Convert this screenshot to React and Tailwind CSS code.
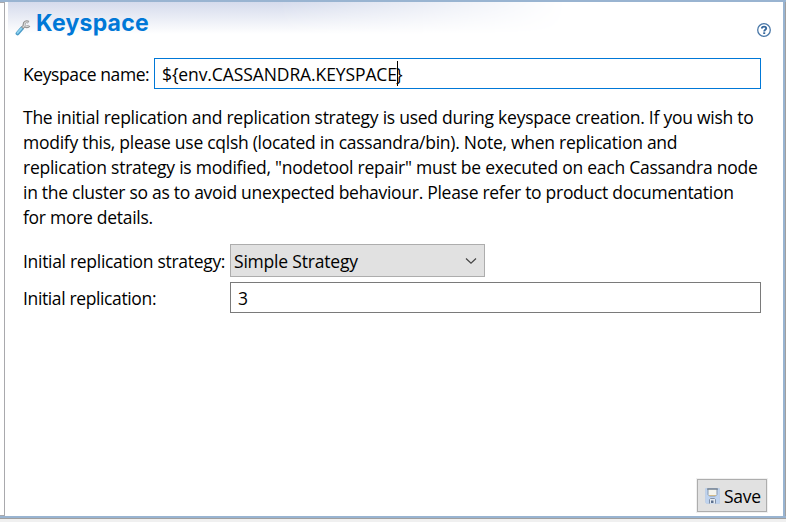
import React from "react";

const paragraph = [
  ["The initial replication and replication strategy is used during keyspace creation. If you wish to", "tracking-[-0.25px]"],
  ["modify this, please use cqlsh (located in cassandra/bin). Note, when replication and", "tracking-[-0.27px]"],
  ["replication strategy is modified, \"nodetool repair\" must be executed on each Cassandra node", "tracking-[-0.25px]"],
  ["in the cluster so as to avoid unexpected behaviour. Please refer to product documentation", "tracking-[-0.285px]"],
  ["for more details.", "tracking-[-0.28px]"],
];

function WrenchIcon() {
  return (
    <svg width="16" height="17" viewBox="0 0 16 17" fill="none">
      <path d="M2.500 14.400 7 9.200" stroke="#4b9cc8" strokeWidth="3.800" strokeLinecap="round" />
      <path d="M2.500 13.800 6.600 9.200" stroke="#8fd3f0" strokeWidth="1.800" strokeLinecap="round" />
      <path d="M7.200 9 10 6" stroke="#8c8c8c" strokeWidth="3.200" />
      <path d="M13.600 3.300C11.500 2 9 3 9 5.500c.300 2.400 3.600 3.200 5.200 1.200" stroke="#8e8e8e" strokeWidth="2.800" />
      <path d="M13.400 3.300C11.500 2.200 9.300 3.200 9.300 5.500c.300 2 3.200 2.700 4.700 1.100M7.600 8.500 10 6" stroke="#d6d6d6" strokeWidth="1.300" />
    </svg>
  );
}

function HelpIcon() {
  return (
    <svg width="14" height="14" viewBox="0 0 14 14" fill="none">
      <circle cx="7" cy="7" r="6.300" fill="#fff" stroke="#4a78a8" strokeWidth="1.300" />
      <path d="M4.900 5.400C4.900 3 9.200 3 9.200 5.300 9.200 6.800 7.200 6.700 7.200 8.500" stroke="#35679c" strokeWidth="1.900" />
      <path d="M6.200 9.300H8.200V11H6.200Z" fill="#35679c" />
    </svg>
  );
}

function FloppyIcon() {
  return (
    <svg width="15" height="16" viewBox="0 0 15 16" fill="none">
      <path d="M.5.500H14.500V15.500H1.500L.500 14.500Z" fill="#bfd3ee" stroke="#c0d0e6" />
      <path d="M3 1H12V6.500L10.500 8H4.500L3 6.500Z" fill="#f4f4ee" stroke="#8799b0" />
      <path d="M2 1H13" stroke="#66727f" />
      <path d="M4 7.500H11" stroke="#cfb98a" />
      <path d="M4.500 15.500V11.500L5.500 10.500H9.500L10.500 11.500V15.500" fill="#e6ebf1" stroke="#8090a8" />
      <path d="M6 12.500H8.500V15H6Z" fill="#5b6f8d" />
    </svg>
  );
}

export default function App() {
  return (
    <div className="flex h-[522px] w-[790px] overflow-hidden bg-white font-['Open_Sans','Noto_Sans',sans-serif] text-[17.5px] leading-[25px] text-black">
      <div className="flex w-[786px] flex-col bg-[#f0f0f0]">
        <div className="flex h-[519px] flex-col border-t-2 border-[#99b4d1] bg-white">
          <div className="flex min-h-0 flex-1">
            <div className="w-[5px] border-y border-r border-[#a9a9ad]" />
            <main className="flex min-w-0 flex-1 flex-col pr-[22px] pl-[18px]">
              <header className="relative -mr-[22px] -ml-[15px] flex h-[56px] items-start">
                <div className="absolute inset-0 bg-linear-to-b from-[#d5dbec] to-white to-[32px] mask-r-from-35% mask-r-to-72%" />
                <div className="relative flex flex-1 items-start pt-[17px] pl-[7px]">
                  <WrenchIcon />
                  <h1 className="-mt-[10px] ml-[5px] font-['Inter','Open_Sans',sans-serif] text-[23px] leading-[28px] font-bold tracking-[0.25px] text-[#0078d7]">Keyspace</h1>
                </div>
                <div className="relative pt-[21px] pr-[12px]"><HelpIcon /></div>
              </header>
              <div className="flex h-[31px] items-center">
                <label className="w-[131px] shrink-0 pt-px tracking-[-0.4px] whitespace-nowrap">Keyspace name:</label>
                <div className="flex h-[31px] flex-1 items-center border border-[#0078d7] pl-[7px]">
                  <span className="pt-px tracking-[-0.1px] whitespace-nowrap">{"${env.CASSANDRA.KEYSPACE"}</span>
                  <span className="h-[25px] w-px bg-black" />
                  <span className="-ml-[2px] pt-px">{"}"}</span>
                </div>
              </div>
              <div className="mt-[16px]">
                {paragraph.map(([text, spacing]) => (
                  <div key={text} className="h-[25px]"><span className={`whitespace-nowrap ${spacing}`}>{text}</span></div>
                ))}
              </div>
              <div className="mt-[14px] flex h-[33px] items-center">
                <label className="w-[207px] shrink-0 pt-px tracking-[-0.3px] whitespace-nowrap">Initial replication strategy:</label>
                <div className="flex h-[33px] w-[255px] items-center justify-between border border-[#adadad] bg-[#e1e1e1] pr-[7px] pl-[3px]">
                  <span className="pt-px tracking-[-0.2px]">Simple Strategy</span>
                  <svg width="12" height="8" viewBox="0 0 12 8" fill="none"><path d="M1 1.500 6 6.200 11 1.500" stroke="#444" strokeWidth="1.200" /></svg>
                </div>
              </div>
              <div className="mt-[5px] flex h-[31px] items-center">
                <label className="w-[207px] shrink-0 pt-px tracking-[-0.37px]">Initial replication:</label>
                <div className="flex h-[31px] flex-1 items-center border border-[#7a7a7a] pt-px pl-[7px]">3</div>
              </div>
              <div className="mt-auto -mr-[6px] mb-[4px] flex justify-end">
                <button className="flex h-[33px] w-[70px] items-center border border-[#adadad] bg-[#e1e1e1] pl-[7px] outline outline-[#f0f0f0]">
                  <FloppyIcon />
                  <span className="ml-[4px] pt-px tracking-[-0.3px]">Save</span>
                </button>
              </div>
            </main>
            <div className="w-[3px] border-r border-[#a0a0a0] bg-[#99b4d1]" />
          </div>
          <div className="h-[3px] border-b border-[#a0a0a0] bg-[#99b4d1]" />
        </div>
      </div>
    </div>
  );
}
